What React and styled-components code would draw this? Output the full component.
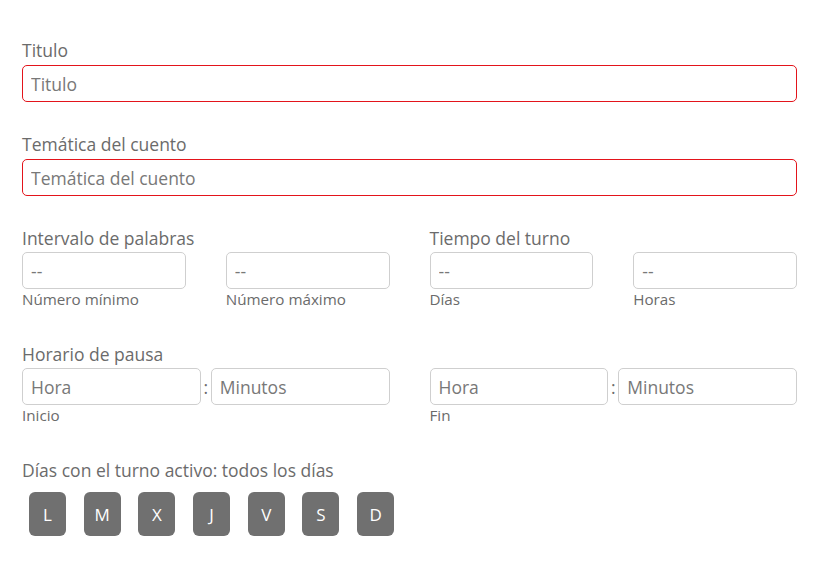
import React from 'react';
import styled, { createGlobalStyle } from 'styled-components';

const GlobalStyle = createGlobalStyle`
  body {
    margin: 0;
    background: #fff;
    font-family: "Open Sans", "Noto Sans", sans-serif;
  }
`;

const Form = styled.form`
  width: 775px;
  margin-left: 22px;
  padding-top: 39px;
  display: flex;
  flex-direction: column;
`;

const Field = styled.div`
  display: flex;
  flex-direction: column;
  margin-bottom: ${props => props.gap ?? 31}px;
`;

const Label = styled.label`
  font-size: 17.5px;
  line-height: 22px;
  color: #6b6b6b;
  white-space: nowrap;
  margin-bottom: ${props => props.tight ? 3 : 4}px;
  min-height: 22px;
`;

const Input = styled.input`
  box-sizing: border-box;
  width: 100%;
  height: 37px;
  padding: 0 8px;
  font-family: inherit;
  font-size: 17.5px;
  color: #6b6b6b;
  background: #fff;
  border: 1px solid ${props => props.invalid ? '#e3141b' : '#cfcfcf'};
  border-radius: 5px;
  outline: none;

  &::placeholder {
    color: #787878;
    opacity: 1;
  }
`;

const Grid = styled.div`
  display: grid;
  grid-template-columns: repeat(4, 1fr);
  column-gap: 40px;
  margin-bottom: ${props => props.gap || 33}px;
`;

const Cell = styled.div`
  grid-column: span ${props => props.span || 1};
  display: flex;
  flex-direction: column;
  min-width: 0;
`;

const Hint = styled.span`
  font-size: 15.2px;
  line-height: 19px;
  color: #6b6b6b;
  white-space: nowrap;
  margin-top: 1px;
`;

const TimePair = styled.div`
  display: grid;
  grid-template-columns: 1fr 10px 1fr;
  align-items: center;
`;

const Colon = styled.span`
  text-align: center;
  font-size: 17.5px;
  color: #6b6b6b;
`;

const Days = styled.div`
  display: flex;
  gap: 17.7px;
  margin-top: 7px;
  padding-left: 7px;
`;

const DayButton = styled.button`
  width: 37px;
  height: 44px;
  border: none;
  border-radius: 6px;
  background: #707070;
  color: #fff;
  font-family: inherit;
  font-size: 17px;
  padding: 0;
  cursor: pointer;
`;

const days = ['L', 'M', 'X', 'J', 'V', 'S', 'D'];

function TimeField({ hint, title }) {
  return (
    <Cell span={2}>
      <Label tight>{title}</Label>
      <TimePair>
        <Input placeholder="Hora" />
        <Colon>:</Colon>
        <Input placeholder="Minutos" />
      </TimePair>
      <Hint>{hint}</Hint>
    </Cell>
  );
}

export default function App() {
  return (
    <>
      <GlobalStyle />
      <Form onSubmit={e => e.preventDefault()}>
        <Field>
          <Label>Titulo</Label>
          <Input invalid placeholder="Titulo" />
        </Field>
        <Field>
          <Label>Temática del cuento</Label>
          <Input invalid placeholder="Temática del cuento" />
        </Field>

        <Grid gap={34}>
          <Cell>
            <Label tight>Intervalo de palabras</Label>
            <Input placeholder="--" />
            <Hint>Número mínimo</Hint>
          </Cell>
          <Cell>
            <Label tight />
            <Input placeholder="--" />
            <Hint>Número máximo</Hint>
          </Cell>
          <Cell>
            <Label tight>Tiempo del turno</Label>
            <Input placeholder="--" />
            <Hint>Días</Hint>
          </Cell>
          <Cell>
            <Label tight />
            <Input placeholder="--" />
            <Hint>Horas</Hint>
          </Cell>
        </Grid>

        <Grid gap={34}>
          <TimeField title="Horario de pausa" hint="Inicio" />
          <TimeField title="" hint="Fin" />
        </Grid>

        <Field gap={0}>
          <Label>Días con el turno activo: todos los días</Label>
          <Days>
            {days.map(d => (
              <DayButton type="button" key={d}>{d}</DayButton>
            ))}
          </Days>
        </Field>
      </Form>
    </>
  );
}
